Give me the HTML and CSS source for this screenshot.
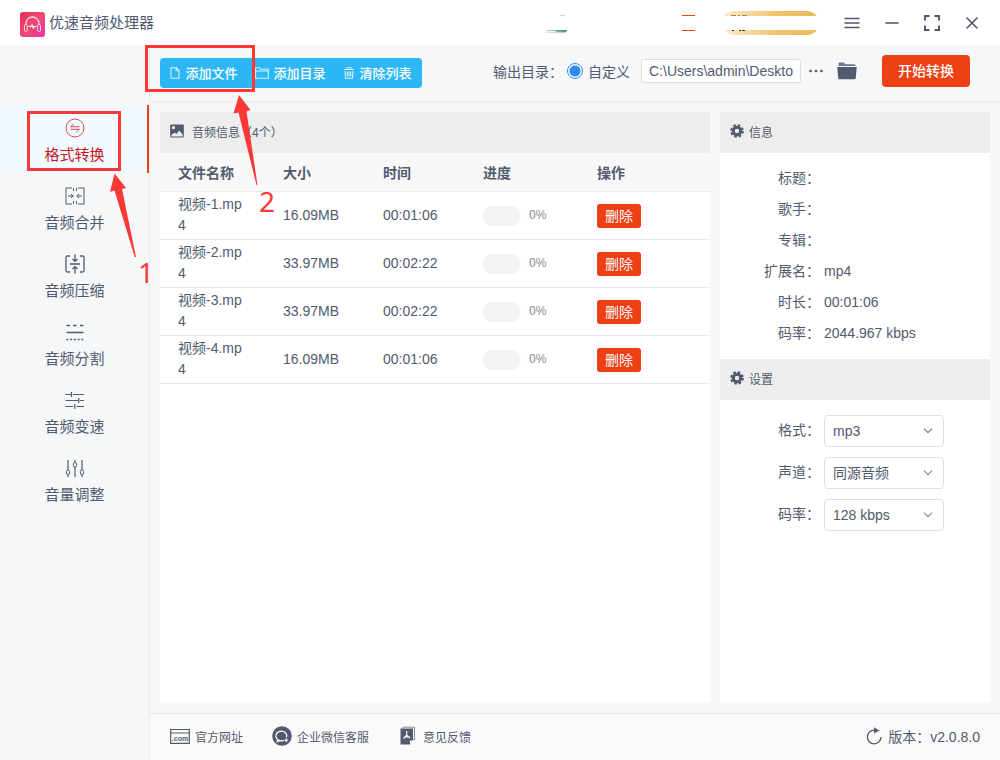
FILE: index.html
```html
<!DOCTYPE html>
<html lang="zh-CN">
<head>
<meta charset="utf-8">
<title>优速音频处理器</title>
<link rel="stylesheet" href="styles.css">
</head>
<body>
<div class="app">
  <header class="titlebar">
    <svg class="logo" width="25" height="25" viewBox="0 0 25 25">
      <defs><linearGradient id="lg" x1="0" y1="0" x2="1" y2="1"><stop offset="0" stop-color="#e8304f"/><stop offset=".5" stop-color="#ee4a76"/><stop offset="1" stop-color="#ee2fa6"/></linearGradient></defs>
      <rect width="25" height="25" rx="3" fill="url(#lg)"/>
      <path d="M6 13v-1.500a6.500 6.500 0 0 1 13 0V13" fill="none" stroke="#ffd9e2" stroke-width="1.300"/>
      <rect x="4.500" y="12.500" width="2.800" height="7" rx="1.200" fill="none" stroke="#ffd9e2"/>
      <rect x="17.700" y="12.500" width="2.800" height="7" rx="1.200" fill="none" stroke="#ffd9e2"/>
      <path d="M8.500 14.500H11l1-1.500 1.300 3 1-1.500h2.200" fill="none" stroke="#fff" stroke-width="1.200"/>
    </svg>
    <h1 class="title">优速音频处理器</h1>
    <div class="window-tools">
      <svg class="account" width="274" height="26" viewBox="545 10 274 26">
        <defs>
          <linearGradient id="gold"><stop offset="0" stop-color="#fbebcf"/><stop offset=".6" stop-color="#efc268"/><stop offset="1" stop-color="#ecb95a"/></linearGradient>
          <linearGradient id="teal"><stop offset="0" stop-color="#c5dcdc"/><stop offset="1" stop-color="#3f8b90"/></linearGradient>
        </defs>
        <path d="M560 15.500h5" stroke="#ccd5d5"/>
        <path d="M546 30h21q0 2-3 2.500h-18z" fill="url(#teal)"/>
        <path d="M546 31.500h10" stroke="#e9f1f1"/>
        <path d="M682 15.500h13M682 30.500h13" stroke="#ed4014"/>
        <rect x="722" y="11" width="97" height="24" rx="12" fill="url(#gold)"/>
        <path d="M731 15.500h5M738 15.500h2M742 15.500h5" stroke="#a9843f"/>
        <path d="M732 30.500h2M739 30.500h2M742 30.500h3" stroke="#5a2b20"/>
        <rect x="718" y="16" width="101" height="14" fill="#fff"/>
      </svg>
      <button class="icon-btn" aria-label="菜单"><svg width="16" height="16" viewBox="0 0 16 16"><path d="M.5 3.500h15M.5 8h15M.5 12.500h15"/></svg></button>
      <button class="icon-btn" aria-label="最小化"><svg width="16" height="16" viewBox="0 0 16 16"><path d="M1.500 8h13"/></svg></button>
      <button class="icon-btn" aria-label="最大化"><svg width="16" height="16" viewBox="0 0 16 16"><path d="M1 5.500V1h4.500M10.500 1H15v4.500M15 10.500V15h-4.500M5.500 15H1v-4.500" stroke-width="2"/></svg></button>
      <button class="icon-btn" aria-label="关闭"><svg width="16" height="16" viewBox="0 0 16 16"><path d="M2.500 2.500l11 11M13.500 2.500l-11 11"/></svg></button>
    </div>
  </header>

  <div class="body">
    <nav class="sidebar">
      <button class="nav-item active">
        <svg class="nav-icon" width="20" height="20" viewBox="0 0 20 20"><circle cx="10" cy="10" r="9"/><path d="M14.500 8.700H5.500l3.300-2.800M5.500 11.300h9l-3.300 2.800"/></svg>
        <span>格式转换</span>
      </button>
      <button class="nav-item">
        <svg class="nav-icon" width="20" height="20" viewBox="0 0 20 20"><path d="M7 2H1v16h6M8.500 2v3M8.500 15v3M13 2h6v16h-6M11.500 2v3M11.500 15v3"/><path d="M3 10h5M6 8l2.300 2L6 12M17 10h-5M14 8l-2.300 2 2.300 2"/></svg>
        <span>音频合并</span>
      </button>
      <button class="nav-item">
        <svg class="nav-icon" width="20" height="20" viewBox="0 0 20 20"><path d="M5 2H2.500Q1 2 1 3.500v13Q1 18 2.500 18H5M15 2h2.500Q19 2 19 3.500v13q0 1.500-1.500 1.500H15M5 10h10" stroke-width="1.300"/><path d="M10 .5V7M7.500 5L10 7.300 12.500 5M10 19.500V13M7.500 15l2.500-2.300 2.500 2.300" stroke-width="1.300"/></svg>
        <span>音频压缩</span>
      </button>
      <button class="nav-item">
        <svg class="nav-icon" width="20" height="20" viewBox="0 0 20 20"><path d="M1.500 3.500H5M8 3.500h3.500M15 3.500h3.500M1.500 10.500h17" stroke-width="1.300"/><path d="M1.500 17.500h17" stroke-dasharray="2 1.700" stroke-width="1.300"/></svg>
        <span>音频分割</span>
      </button>
      <button class="nav-item">
        <svg class="nav-icon" width="20" height="20" viewBox="0 0 20 20"><path d="M.5 4.500h6M8 4.500h11M.5 10.500h12.500M15 10.500h4M.5 16.500H8M11.500 16.500H19M6.500 2v5M13.800 8v5M9.800 14v5" stroke-width="1.200"/></svg>
        <span>音频变速</span>
      </button>
      <button class="nav-item">
        <svg class="nav-icon" width="20" height="20" viewBox="0 0 20 20"><path d="M3 2v10M3 16.500V19M10 2v2.500M10 9v10M17 2v10M17 16.500V19" stroke-width="1.200"/><rect x="1.400" y="12" width="3.200" height="4.500" rx="1.500"/><rect x="8.400" y="4.500" width="3.200" height="4.500" rx="1.500"/><rect x="15.400" y="12" width="3.200" height="4.500" rx="1.500"/></svg>
        <span>音量调整</span>
      </button>
    </nav>

    <div class="main">
      <div class="toolbar">
        <div class="btn-group">
          <button class="group-btn"><svg width="12" height="12" viewBox="0 0 12 12"><path d="M2 .7h5.500L10 3.500v7.800H2zM7.200.7v3.100H10"/></svg>添加文件</button>
          <button class="group-btn"><svg width="14" height="12" viewBox="0 0 14 12"><path d="M.6 11.200V.8h4l1.200 1.500h7.600v8.900zM.6 4h12.800"/></svg>添加目录</button>
          <button class="group-btn"><svg width="12" height="12" viewBox="0 0 12 12"><path d="M1 2.500h10M4 2.500V.8h4v1.700M2 4l.6 7.300h6.800L10 4M4.300 4.500v5M6 4.500v5M7.700 4.500v5"/></svg>清除列表</button>
        </div>
        <div class="output">
          <span>输出目录：</span>
          <label class="radio"><input type="radio" name="dir" checked>自定义</label>
          <input class="path" type="text" aria-label="输出目录" value="C:\Users\admin\Deskto">
          <button class="more" aria-label="更多"><svg width="16" height="16" viewBox="0 0 16 16"><g fill="#515a6e"><circle cx="2.500" cy="8" r="1.300"/><circle cx="8" cy="8" r="1.300"/><circle cx="13.500" cy="8" r="1.300"/></g></svg></button>
          <button aria-label="打开文件夹"><svg width="20" height="18" viewBox="0 0 20 18"><path d="M1.500 4V1.500Q1.500.5 2.500.5h4.500l1.200 1.800h9q1.300 0 1.300 1.300V4z" fill="#6d7587"/><path d="M.3 5h19.400l-.9 11q-.1 1.300-1.300 1.300h-15q-1.200 0-1.300-1.300z" fill="#515a6e"/></svg></button>
        </div>
        <button class="start">开始转换</button>
      </div>

      <div class="content">
        <section class="panel files">
          <h2 class="panel-head wide"><svg width="14" height="14" viewBox="0 0 14 14"><path fill="#515a6e" fill-rule="evenodd" d="M1 .5h12q.8 0 .8.800v11.400q0 .8-.8.800H1q-.8 0-.8-.8V1.300Q.2.500 1 .5zM3.500 2a1.600 1.600 0 1 0 .01 0zM1 12.500h11.800V11L9.300 6.500 6.500 10 4.500 8.500 1 11.500z"/></svg>音频信息（4个）</h2>
          <table class="table">
            <colgroup><col class="c-name"><col class="c-size"><col class="c-time"><col class="c-prog"><col></colgroup>
            <thead><tr><th>文件名称</th><th>大小</th><th>时间</th><th>进度</th><th>操作</th></tr></thead>
            <tbody>
              <tr><td class="name">视频-1.mp4</td><td>16.09MB</td><td>00:01:06</td><td><div class="progress"><i></i><span>0%</span></div></td><td><button class="del">删除</button></td></tr>
              <tr><td class="name">视频-2.mp4</td><td>33.97MB</td><td>00:02:22</td><td><div class="progress"><i></i><span>0%</span></div></td><td><button class="del">删除</button></td></tr>
              <tr><td class="name">视频-3.mp4</td><td>33.97MB</td><td>00:02:22</td><td><div class="progress"><i></i><span>0%</span></div></td><td><button class="del">删除</button></td></tr>
              <tr><td class="name">视频-4.mp4</td><td>16.09MB</td><td>00:01:06</td><td><div class="progress"><i></i><span>0%</span></div></td><td><button class="del">删除</button></td></tr>
            </tbody>
          </table>
        </section>

        <aside class="panel side">
          <h2 class="panel-head"><svg width="14" height="14" viewBox="0 0 14 14"><circle cx="7" cy="7" r="3.700" fill="none" stroke="#515a6e" stroke-width="3"/><circle cx="7" cy="7" r="5.800" fill="none" stroke="#515a6e" stroke-width="2" stroke-dasharray="2.600 1.955"/></svg>信息</h2>
          <dl class="info">
            <dt>标题：</dt><dd></dd>
            <dt>歌手：</dt><dd></dd>
            <dt>专辑：</dt><dd></dd>
            <dt>扩展名：</dt><dd>mp4</dd>
            <dt>时长：</dt><dd>00:01:06</dd>
            <dt>码率：</dt><dd>2044.967 kbps</dd>
          </dl>
          <h2 class="panel-head"><svg width="14" height="14" viewBox="0 0 14 14"><circle cx="7" cy="7" r="3.700" fill="none" stroke="#515a6e" stroke-width="3"/><circle cx="7" cy="7" r="5.800" fill="none" stroke="#515a6e" stroke-width="2" stroke-dasharray="2.600 1.955"/></svg>设置</h2>
          <div class="settings">
            <label for="fmt">格式：</label>
            <div class="select"><select id="fmt"><option>mp3</option></select><svg width="10" height="6" viewBox="0 0 10 6"><path d="M1 .7l4 4 4-4"/></svg></div>
            <label for="chan">声道：</label>
            <div class="select"><select id="chan"><option>同源音频</option></select><svg width="10" height="6" viewBox="0 0 10 6"><path d="M1 .7l4 4 4-4"/></svg></div>
            <label for="rate">码率：</label>
            <div class="select"><select id="rate"><option>128 kbps</option></select><svg width="10" height="6" viewBox="0 0 10 6"><path d="M1 .7l4 4 4-4"/></svg></div>
          </div>
        </aside>
      </div>

      <footer class="footer">
        <a href="#"><svg width="20" height="20" viewBox="0 0 20 20"><path d="M.7 3.500h18.600v13.800H.7zM.7 7h18.600" fill="none" stroke="#515a6e" stroke-width="1.200"/><text x="10" y="15" text-anchor="middle" class="com">.com</text></svg>官方网址</a>
        <a href="#"><svg width="20" height="20" viewBox="0 0 20 20"><circle cx="10" cy="10" r="9.800" fill="#515a6e"/><path d="M14.500 11.500a5.500 4.900 0 1 0-2.700 2.800M5.800 13.500l-.6 2.200 2.600-1.100" fill="none" stroke="#fff" stroke-width="1.300"/><path d="M14 12l1 1.500 1.600.6-1.500 1-.7 1.500-1-1.500-1.500-.7 1.500-.9z" fill="#fff"/></svg>企业微信客服</a>
        <a href="#"><svg width="20" height="20" viewBox="0 0 20 20"><path d="M5 2.500V1.200h11.500v12.500H15" fill="none" stroke="#868d9c"/><path d="M2.500 2.500H15v11.300L11.800 18.500H2.500z" fill="#515a6e"/><path d="M12 18.500v-4h3" fill="#fafafa"/><path d="M8.700 5v4.200L5.500 12.500M8.700 9.200l3.500 2.800M6.500 11.200l4.500-.4" fill="none" stroke="#fff" stroke-width="1.100"/></svg>意见反馈</a>
        <button class="version"><svg width="18" height="18" viewBox="0 0 18 18"><path d="M9.500 3.200A6.800 6.800 0 1 0 16 10" fill="none" stroke="#515a6e" stroke-width="1.300"/><path d="M9 .3l5.500 3.200L9 6.500z" fill="#515a6e"/></svg>版本：v2.0.8.0</button>
      </footer>
    </div>
  </div>

  <div class="mark mark-nav"></div>
  <div class="mark mark-add"></div>
  <svg class="arrows" width="270" height="270" viewBox="0 0 270 270"><path d="M114.500 173.500L126 188l-4 1L136 257h-1.300L114.500 190.500l-4.500 1.500z"/><path d="M239 95l11.500 15-4 1.500L257.500 185h-1L238.500 112.500l-5 1z"/></svg>
  <span class="step step-one">1</span>
  <span class="step step-two">2</span>
</div>
</body>
</html>
```

FILE: styles.css
```css
* { box-sizing: border-box; }

body, h1, h2, dl, dd { margin: 0; }

body, button, input, select {
  font-family: "Liberation Sans", "Noto Sans CJK SC", sans-serif;
  font-size: 14px;
  color: #515a6e;
}

button { padding: 0; border: 0; background: none; }
svg { display: block; flex: none; }

.app {
  position: relative;
  display: flex;
  flex-direction: column;
  min-height: 100vh;
  background: #f5f7f9;
}

.titlebar {
  display: flex;
  align-items: center;
  height: 45px;
  padding: 0 20px;
  background: #fff;
}
.logo { margin-top: 3px; }
.title { margin-left: 4px; padding-bottom: 2px; font-size: 15px; font-weight: 400; }
.window-tools { display: flex; align-items: center; gap: 24px; margin-left: auto; }
.account { margin-right: 1px; }
.icon-btn svg { fill: none; stroke: #515a6e; stroke-width: 1.6; }

.body { display: flex; flex: 1; }

.sidebar {
  width: 150px;
  flex: none;
  padding-top: 60px;
  border-right: 1px solid #e8eaec;
}
.nav-item {
  display: flex;
  flex-direction: column;
  align-items: center;
  gap: 6px;
  width: 100%;
  height: 68px;
  padding-top: 13px;
  font-size: 15px;
  line-height: 22px;
}
.nav-icon { fill: none; stroke: #515a6e; stroke-width: 1; }
.active { color: #c9151e; background: #f0faff; box-shadow: inset -2px 0 #ed4014; }
.active .nav-icon { stroke: #dc4a52; }

.main { display: flex; flex: 1; flex-direction: column; min-width: 0; }

.toolbar {
  display: flex;
  align-items: center;
  height: 57px;
  padding: 0 30px 4px 10px;
  border-bottom: 1px solid #e8eaec;
}
.btn-group {
  display: flex;
  margin-top: 3px;
  padding-right: 1px;
  border-radius: 4px;
  background: #2db7f5;
}
.group-btn {
  display: flex;
  align-items: center;
  justify-content: center;
  gap: 4px;
  width: 87px;
  height: 30px;
  font-size: 13px;
  font-weight: 500;
  color: #fff;
}
.group-btn svg { fill: none; stroke: #d5f1fd; stroke-width: 1.1; }
.output { display: flex; align-items: center; margin-left: auto; }
.radio { display: flex; align-items: center; margin-left: 4px; }
.radio input {
  width: 16px;
  height: 16px;
  margin: 0 5px 0 0;
  border: 1px solid #2d8cf0;
  border-radius: 50%;
  appearance: none;
  background: radial-gradient(circle, #2d8cf0 5px, #fff 6px);
}
.path {
  width: 160px;
  height: 24px;
  margin-left: 11px;
  padding: 0 7px;
  border: 1px solid #dcdee2;
  border-radius: 2px;
  background: #fff;
}
.more { margin: 0 13px 0 7px; }
.start {
  width: 88px;
  height: 32px;
  margin-left: 25px;
  padding-bottom: 2px;
  border-radius: 4px;
  background: #ed4014;
  color: #fff;
  font-weight: 500;
}

.content { display: flex; flex: 1; gap: 10px; padding: 10px 10px 11px; }
.panel { background: #fff; }
.files { flex: 1; min-width: 0; }
.side { width: 270px; flex: none; }
.panel-head {
  display: flex;
  align-items: center;
  gap: 5px;
  height: 41px;
  padding: 0 10px 3px;
  background: #ededed;
  font-size: 12px;
  font-weight: 400;
}
.wide { gap: 8px; }

.table { width: 100%; border-collapse: separate; border-spacing: 0; table-layout: fixed; }
.c-name { width: 105px; }
.c-size, .c-time { width: 100px; }
.c-prog { width: 114px; }
.table th, .table td { padding: 0 18px; text-align: left; border-bottom: 1px solid #e8eaec; }
.table th { height: 39px; background: #f8f8f9; font-weight: 700; }
.table th + th, .table td + td { padding-right: 0; }
.table td { height: 48px; line-height: 21px; }
.table .name { padding-bottom: 2px; word-break: break-all; }
.progress { display: flex; align-items: center; gap: 8px; font-size: 12px; color: #808695; }
.progress i { width: 38px; height: 20px; border-radius: 10px; background: #f3f3f3; }
.del {
  display: block;
  width: 44px;
  height: 24px;
  padding-bottom: 2px;
  border-radius: 3px;
  background: #ed4014;
  color: #fff;
}

.info {
  display: grid;
  grid-template-columns: 100px 1fr;
  column-gap: 4px;
  grid-auto-rows: 31px;
  padding: 10px 0;
  line-height: 31px;
}
.info dt, .settings label { text-align: right; white-space: nowrap; }
.settings {
  display: grid;
  grid-template-columns: 100px 120px;
  gap: 10px 4px;
  padding-top: 15px;
  line-height: 30px;
}
.select { display: grid; align-items: center; }
.select select {
  grid-area: 1 / 1;
  height: 32px;
  padding: 0 8px;
  border: 1px solid #dcdee2;
  border-radius: 4px;
  appearance: none;
  background: #fff;
}
.select svg {
  grid-area: 1 / 1;
  justify-self: end;
  margin-right: 11px;
  fill: none;
  stroke: #808695;
  stroke-width: 1.2;
  pointer-events: none;
}

.footer {
  display: flex;
  align-items: center;
  gap: 29px;
  height: 47px;
  padding: 0 20px 2px;
  border-top: 1px solid #e8eaec;
  background: #fafafa;
}
.footer a { display: flex; align-items: center; gap: 5px; font-size: 12px; color: #515a6e; text-decoration: none; }
.com { font: 700 7px "Liberation Sans", sans-serif; fill: #515a6e; }
.version { display: flex; align-items: center; gap: 5px; margin-left: auto; }

.mark { position: absolute; border: 3px solid #fc3737; pointer-events: none; }
.mark-nav { left: 27px; top: 111px; width: 94px; height: 60px; }
.mark-add { left: 145px; top: 45px; width: 110px; height: 47px; }
.arrows { position: absolute; left: 0; top: 0; fill: #fc3737; pointer-events: none; }
.step {
  position: absolute;
  font: 28px/40px "Noto Sans", sans-serif;
  color: #fc3737;
}
.step-one { left: 138px; top: 252px; }
.step-two { left: 259px; top: 181px; }
```
